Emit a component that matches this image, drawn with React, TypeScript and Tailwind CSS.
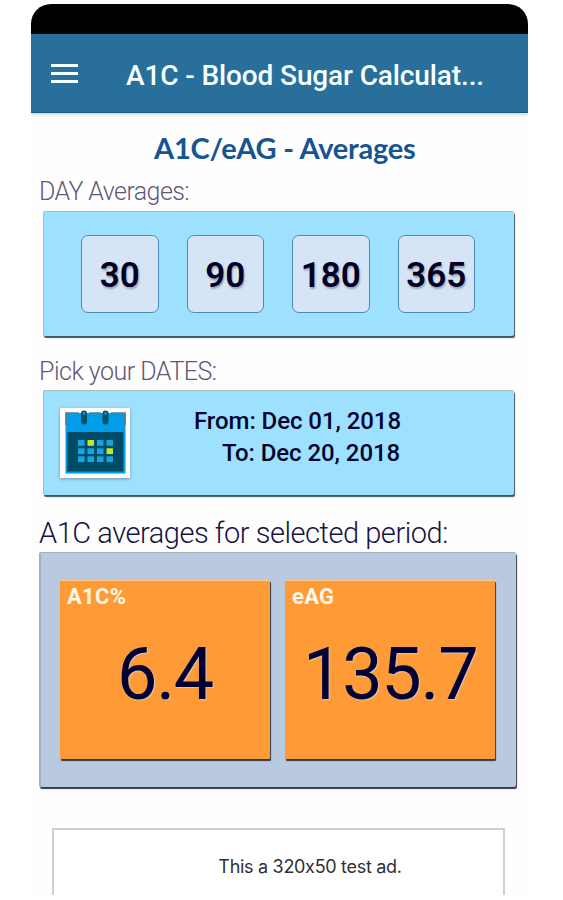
import React from "react";

const periods = ["30", "90", "180", "365"];

function CalendarIcon() {
  const columns = [18, 27.5, 37, 46.5];
  const rows = [32, 40.3, 48.3];
  return (
    <svg className="block size-[70px]" viewBox="0 0 70 70" aria-label="Calendar">
      <rect x="5.500" y="5" width="60" height="60.5" fill="#009ee8" />
      <path d="M6 17V5H19M29 5H41M51 5H65V17" fill="none" stroke="#60788f" strokeWidth="1.6" />
      <rect x="7.300" y="24" width="56" height="39.500" fill="#004b66" />
      <rect x="21" y="2.500" width="6" height="14" rx="3" fill="#00536d" />
      <rect x="42.500" y="2.500" width="6" height="14" rx="3" fill="#00536d" />
      <circle cx="24" cy="5.500" r="1.2" fill="#3f9fb8" />
      <circle cx="45.500" cy="5.500" r="1.2" fill="#3f9fb8" />
      {rows.map((y, r) =>
        columns.map((x, c) => (
          <rect
            key={`${r}-${c}`}
            x={x}
            y={y}
            width="6.500"
            height="5.800"
            fill={(r === 0 && c === 1) || (r === 1 && c === 3) ? "#c5e825" : "#16a5e3"}
          />
        )),
      )}
    </svg>
  );
}

function Reading({ label, value, valueClass }: { label: string; value: string; valueClass: string }) {
  return (
    <div className="h-[179px] w-[210px] rounded-[1px] border-t border-[#ffc98c] bg-[#ff9b37] shadow-[1px_2px_1px_#333a3d]">
      <div className="flex h-[30px] items-center pl-[7px] text-[22px] font-bold tracking-[0.3px] text-[#fff6e8]">{label}</div>
      <div className={`flex h-[128px] items-center whitespace-nowrap text-[72px] font-normal tracking-[-1.300px] text-[#020033] [text-shadow:1px_1px_1px_#d8c8bb] ${valueClass}`}>
        {value}
      </div>
    </div>
  );
}

export default function App() {
  return (
    <div className="h-[900px] w-[563px] overflow-hidden bg-white pl-[31px] pt-[4px] font-['Roboto',sans-serif]">
      <main className="flex h-[891px] w-[497px] flex-col overflow-hidden rounded-t-[20px] bg-[#fefefe]">
        <div className="h-[30px] shrink-0 bg-black" />
        <header className="flex h-[79px] shrink-0 items-center border-b border-[#155c83] bg-[#286f9b] pl-[20px] shadow-[0_2px_3px_#d8d4d4]">
          <div className="flex w-[27px] flex-col gap-[5px]">
            <div className="h-[3px] bg-[#f0ffff]" />
            <div className="h-[3px] bg-[#f0ffff]" />
            <div className="h-[3px] bg-[#f0ffff]" />
          </div>
          <h1 className="ml-[48px] whitespace-nowrap pt-[5px] text-[28px] font-medium tracking-[-0.120px] text-[#f6ffff]">
            <span>A1C - Blood Sugar Calculat...</span>
          </h1>
        </header>
        <h2 className="mt-[13px] flex h-[44px] items-center whitespace-nowrap pl-[123px] font-['Lato',sans-serif] text-[29px] font-bold tracking-[-0.250px] text-[#155591]">
          <span>A1C/eAG - Averages</span>
        </h2>
        <div className="mt-[7px] flex h-[30px] items-center whitespace-nowrap pl-[8px] text-[25px] font-light tracking-[-0.580px] text-[#5e5878]">
          <span>DAY Averages:</span>
        </div>
        <section className="ml-[12px] mt-[4px] flex h-[125px] w-[471px] shrink-0 gap-[28px] rounded-[2px] border-l border-t border-[#a9bdc5] bg-[#9ee1ff] pl-[37px] pt-[23px] shadow-[1px_2px_1px_#3f555f]">
          {periods.map((days) => (
            <button
              key={days}
              className="flex h-[78px] w-[77.500px] items-center justify-center rounded-[7px] border-[1.500px] border-[#4c89b8] bg-[#d5e5f5] pt-[5px] text-[35px] font-semibold text-[#020027] [text-shadow:1px_2px_2px_#9ca3ae]"
            >
              <span>{days}</span>
            </button>
          ))}
        </section>
        <div className="mt-[20px] flex h-[30px] items-center whitespace-nowrap pl-[8px] pt-[1px] text-[25px] font-light tracking-[-0.500px] text-[#5e5878]">
          <span>Pick your DATES:</span>
        </div>
        <section className="ml-[12px] mt-[4px] flex h-[105px] w-[471px] shrink-0 rounded-[2px] border-l border-t border-[#a9bdc5] bg-[#9ee1ff] pl-[16px] pt-[17px] shadow-[1px_2px_1px_#3f555f]">
          <div className="size-[70px] bg-white shadow-[0_1px_3px_#7895a0]">
            <CalendarIcon />
          </div>
          <div className="ml-[64px] w-[220px] whitespace-nowrap text-[24px] font-medium leading-[32px] tracking-[-0.060px] text-[#04042f]">
            <div className="-mt-[3px]"><span>From: Dec 01, 2018</span></div>
            <div className="pl-[28px]"><span>To: Dec 20, 2018</span></div>
          </div>
        </section>
        <div className="mt-[18px] flex h-[38px] items-center whitespace-nowrap pl-[8px] pt-[4px] text-[29px] font-light tracking-[-0.460px] text-[#17123f]">
          <span>A1C averages for selected period:</span>
        </div>
        <section className="ml-[8px] mt-[1px] flex h-[235px] w-[477px] shrink-0 gap-[15px] rounded-[2px] border-l-2 border-t border-[#a5aeba] bg-[#b8c9e0] pl-[19px] pt-[27px] shadow-[1px_2px_1px_#343b43]">
          <Reading label="A1C%" value="6.4" valueClass="pl-[57px]" />
          <Reading label="eAG" value="135.7" valueClass="pl-[18px]" />
        </section>
        <footer className="ml-[21px] mt-[41px] flex h-[67px] w-[453px] shrink-0 justify-center border-2 border-b-0 border-[#d0d0d0] bg-white pt-[23px] font-['Inter',sans-serif] text-[18px] tracking-[-0.300px] text-[#303030] [font-feature-settings:'calt'_0]">
          <span className="ml-[63px] whitespace-nowrap">This a 320x50 test ad.</span>
        </footer>
      </main>
    </div>
  );
}
